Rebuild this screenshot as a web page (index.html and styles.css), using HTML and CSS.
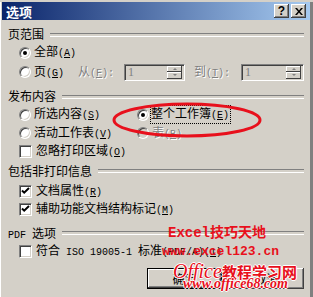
FILE: index.html
```html
<!DOCTYPE html>
<html lang="zh-CN">
<head>
    <meta charset="UTF-8">
    <title>选项</title>
    <link rel="stylesheet" href="styles.css">
</head>
<body>
    <div class="window">
        <!-- Title bar -->
        <div class="titlebar">
            <span class="title">选项</span>
            <div class="title-buttons">
                <span class="tbtn help">?</span>
                <span class="tbtn close">
                    <svg width="8" height="7" viewBox="0 0 8 7"><path d="M0 0h2l2 2.5L6 0h2L5 3.5 8 7H6L4 4.5 2 7H0l3-3.5z" fill="#000"/></svg>
                </span>
            </div>
        </div>

        <div class="content">
            <!-- 页范围 -->
            <div class="group-title h19 mt4"><span>页范围</span></div>
            <div class="row h19">
                <span class="radio checked"></span>
                <span class="label">全部<span class="en">(<u>A</u>)</span></span>
            </div>
            <div class="row h20 page-row">
                <span class="radio"></span>
                <span class="label page-label">页<span class="en">(<u>G</u>)</span></span>
                <span class="label disabled from">从<span class="en">(<u>F</u>):</span></span>
                <div class="spin-input w61">
                    <span class="value">1</span>
                    <div class="spinner"><span class="up"></span><span class="down"></span></div>
                </div>
                <span class="label disabled to">到<span class="en">(<u>T</u>):</span></span>
                <div class="spin-input w63">
                    <span class="value">1</span>
                    <div class="spinner"><span class="up"></span><span class="down"></span></div>
                </div>
            </div>

            <!-- 发布内容 -->
            <div class="group-title h19 mt4"><span>发布内容</span></div>
            <div class="two-col h19">
                <div class="row">
                    <span class="radio"></span>
                    <span class="label">所选内容<span class="en">(<u>S</u>)</span></span>
                </div>
                <div class="row right">
                    <span class="radio checked"></span>
                    <span class="label focused">整个工作簿<span class="en">(<u>E</u>)</span></span>
                </div>
            </div>
            <div class="two-col h18">
                <div class="row">
                    <span class="radio"></span>
                    <span class="label">活动工作表<span class="en">(<u>V</u>)</span></span>
                </div>
                <div class="row right">
                    <span class="radio off"></span>
                    <span class="label disabled">表<span class="en">(<u>B</u>)</span></span>
                </div>
            </div>
            <div class="row h18">
                <span class="check"></span>
                <span class="label">忽略打印区域<span class="en">(<u>O</u>)</span></span>
            </div>

            <!-- 包括非打印信息 -->
            <div class="group-title h18 mt1"><span>包括非打印信息</span></div>
            <div class="row h18 mt3">
                <span class="check checked"><svg width="9" height="9" viewBox="0 0 9 9"><path d="M1 3.5l2.2 2.2L8 1" stroke="#000" stroke-width="2" fill="none"/></svg></span>
                <span class="label">文档属性<span class="en">(<u>R</u>)</span></span>
            </div>
            <div class="row h18">
                <span class="check checked"><svg width="9" height="9" viewBox="0 0 9 9"><path d="M1 3.5l2.2 2.2L8 1" stroke="#000" stroke-width="2" fill="none"/></svg></span>
                <span class="label">辅助功能文档结构标记<span class="en">(<u>M</u>)</span></span>
            </div>

            <!-- PDF 选项 -->
            <div class="group-title h18 mt5"><span><span class="en">PDF </span>选项</span></div>
            <div class="row h18 mt1">
                <span class="check"></span>
                <span class="label">符合<span class="en"> ISO 19005-1 </span>标准<span class="en">(PDF/A)(<u>1</u>)</span></span>
            </div>

            <div class="actions">
                <button class="btn default">确定</button>
                <button class="btn">取消</button>
            </div>
        </div>

        <!-- Annotation overlays -->
        <svg class="mark" width="313" height="297" viewBox="0 0 313 297">
            <ellipse cx="187" cy="118" rx="73" ry="16" fill="none" stroke="#e8101c" stroke-width="3"/>
        </svg>
        <div class="wm wm-excel">Excel技巧天地</div>
        <div class="wm wm-excel-url">www.excel123.cn</div>
        <div class="wm wm-office"><span class="office">Office</span>教程学习网</div>
        <div class="wm wm-office-url">www.office68.com</div>
    </div>
</body>
</html>
```

FILE: styles.css
```css
* {
    margin: 0;
    padding: 0;
    box-sizing: border-box;
}

body {
    width: 313px;
    height: 297px;
    overflow: hidden;
    background: #d4d0c8;
    font-family: "Noto Sans CJK SC", sans-serif;
    font-size: 12px;
    color: #000;
}

.window {
    position: relative;
    width: 313px;
    height: 297px;
    background: #d4d0c8;
    border-left: 1px solid #fff;
    border-right: 3px solid #808080;
    box-shadow: inset 1px 0 #d4d0c8;
}

/* Title bar */
.titlebar {
    display: flex;
    align-items: center;
    justify-content: space-between;
    height: 18px;
    margin: 2px 0 0 1px;
    padding: 0 4px 0 4px;
    background: linear-gradient(to right, #0a246a, #a6caf0);
}

.title {
    color: #fff;
    font-weight: bold;
    font-size: 13px;
}

.title-buttons {
    display: flex;
    gap: 2px;
}

.tbtn {
    display: flex;
    align-items: center;
    justify-content: center;
    width: 15px;
    height: 14px;
    background: #d4d0c8;
    box-shadow: inset -1px -1px #404040, inset 1px 1px #fff, inset -2px -2px #808080;
    font-family: "Liberation Sans", sans-serif;
    font-weight: bold;
    font-size: 12px;
    line-height: 1;
}

/* Content */
.content {
    display: flex;
    flex-direction: column;
}

.h18 { height: 18px; }
.h19 { height: 19px; }
.h20 { height: 20px; }
.mt1 { margin-top: 1px; }
.mt3 { margin-top: 3px; }
.mt4 { margin-top: 4px; }
.mt5 { margin-top: 5px; }

.en {
    font-family: "Liberation Mono", monospace;
    font-size: 10px;
    white-space: pre;
}

.group-title {
    display: flex;
    align-items: center;
    padding: 0 6px 0 7px;
}

.group-title::after {
    content: "";
    flex: 1;
    height: 2px;
    margin: 2px 0 0 6px;
    border-top: 1px solid #808080;
    border-bottom: 1px solid #fff;
}

.row {
    display: flex;
    align-items: center;
    padding-left: 18px;
}

.two-col {
    display: grid;
    grid-template-columns: 136px 1fr;
}

.two-col .row.right {
    padding-left: 0;
}

.label {
    white-space: nowrap;
    line-height: 14px;
}

.disabled {
    color: #808080;
    text-shadow: 1px 1px 0 #fff;
}

.focused {
    outline: 1px dotted #000;
    outline-offset: 0;
    margin-left: -1px;
    padding-right: 1px;
}

/* Radio buttons */
.radio {
    flex: none;
    position: relative;
    width: 12px;
    height: 12px;
    margin-right: 3px;
    border-radius: 50%;
    background: #fff;
    border: 1px solid;
    border-color: #808080 #fff #fff #808080;
    box-shadow: inset 1px 1px #404040, inset -1px -1px #d4d0c8;
}

.radio.off {
    background: #d4d0c8;
}

.radio.checked::after {
    content: "";
    position: absolute;
    left: 3px;
    top: 3px;
    width: 4px;
    height: 4px;
    border-radius: 50%;
    background: #000;
}

/* Checkboxes */
.check {
    flex: none;
    display: flex;
    align-items: center;
    justify-content: center;
    width: 13px;
    height: 13px;
    margin-right: 4px;
    background: #fff;
    border: 1px solid;
    border-color: #808080 #fff #fff #808080;
    box-shadow: inset 1px 1px #404040, inset -1px -1px #d4d0c8;
}

/* Page range row */
.page-label { width: 44px; }
.from { width: 46px; }
.to { width: 47px; margin-left: 9px; }
.w61 { width: 61px; }
.w63 { width: 63px; }

.spin-input {
    display: flex;
    align-items: center;
    justify-content: space-between;
    height: 17px;
    padding: 2px;
    background: #d4d0c8;
    border: 1px solid;
    border-color: #808080 #fff #fff #808080;
    box-shadow: inset 1px 1px #404040, inset -1px -1px #d4d0c8;
}

.spin-input .value {
    padding-left: 1px;
    color: #808080;
    font-family: "Liberation Serif", serif;
    font-size: 12px;
    line-height: 1;
}

.spinner {
    display: flex;
    flex-direction: column;
    width: 15px;
    height: 13px;
}

.spinner span {
    position: relative;
    flex: 1;
    background: #d4d0c8;
    box-shadow: inset -1px -1px #404040, inset 1px 1px #fff;
}

.spinner .up::after,
.spinner .down::after {
    content: "";
    position: absolute;
    left: 6px;
    top: 2px;
    border-left: 2px solid transparent;
    border-right: 2px solid transparent;
}

.spinner .up::after {
    border-bottom: 2px solid #808080;
}

.spinner .down::after {
    border-top: 2px solid #808080;
}

/* Dialog buttons */
.actions {
    display: flex;
    justify-content: flex-end;
    gap: 7px;
    margin-top: 8px;
    padding-right: 6px;
}

.btn {
    width: 75px;
    height: 21px;
    background: #d4d0c8;
    border: none;
    font-family: "Noto Sans CJK SC", sans-serif;
    font-size: 12px;
    box-shadow: inset -1px -1px #404040, inset 1px 1px #fff, inset -2px -2px #808080;
}

.btn.default {
    border: 1px solid #000;
    box-shadow: inset -1px -1px #404040, inset 1px 1px #fff, inset -2px -2px #808080;
}

/* Annotation overlays */
.mark {
    position: absolute;
    left: -1px;
    top: 0;
    pointer-events: none;
}

.wm {
    position: absolute;
    white-space: nowrap;
    color: #e8101c;
    font-weight: bold;
    line-height: 1;
}

.wm-excel {
    left: 167px;
    top: 224px;
    font-family: "Liberation Mono", "Noto Sans CJK SC", monospace;
    font-size: 14px;
}

.wm-excel-url {
    left: 161px;
    top: 243px;
    font-family: "Liberation Mono", monospace;
    font-size: 13px;
}

.wm-office {
    left: 172px;
    top: 259px;
    font-family: "Noto Sans CJK SC", sans-serif;
    font-size: 15px;
    text-shadow: 1px 0 #fff, -1px 0 #fff, 0 1px #fff, 0 -1px #fff;
}

.wm-office .office {
    font-family: "Liberation Serif", serif;
    font-style: italic;
    font-size: 20px;
    font-weight: normal;
}

.wm-office-url {
    left: 182px;
    top: 275px;
    font-family: "Liberation Serif", serif;
    font-style: italic;
    font-size: 14px;
    text-shadow: 1px 0 #fff, -1px 0 #fff, 0 1px #fff, 0 -1px #fff;
}
```
